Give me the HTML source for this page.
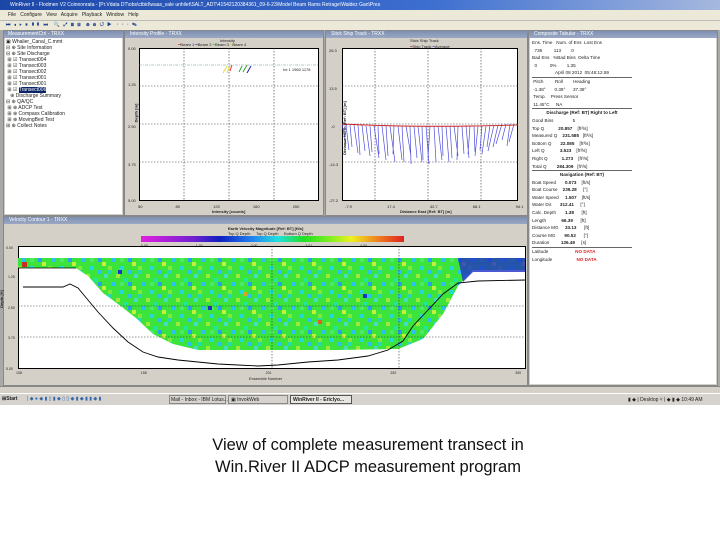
<!DOCTYPE html>
<html><head><meta charset="utf-8"><style>
*{margin:0;padding:0;box-sizing:border-box}
body{width:720px;height:540px;background:#fff;position:relative;overflow:hidden;font-family:"Liberation Sans",sans-serif}
.a{position:absolute}
.t{font-size:5px;color:#222;white-space:nowrap;line-height:6px}
.tb{background:linear-gradient(#7d8fb4,#9aa8c2);height:7px}
.cap{font-family:"Liberation Sans",sans-serif;font-size:16.5px;color:#111;width:720px;left:8px;text-align:center}
</style></head><body>
<!-- title bar -->
<div class="a" style="left:0;top:0;width:720px;height:10px;background:linear-gradient(90deg,#1c47a8,#3d6fd0 60%,#a6b8de)"></div>
<div class="a t" style="left:10px;top:2px;color:#fff">WinRiver II - Flodmen V2 Coinnonrata - [Pr.Vdata DT\obs\ctbid\waas_vale unhilet\SALT_ADT\41542120384361_09-6-23\Model Beam Rams Retrage\Waldez Gan\Pres</div>
<div class="a" style="left:0;top:10px;width:720px;height:10px;background:#ece9d8"></div>
<div class="a t" style="left:8px;top:12px">File &nbsp; Configure &nbsp; View &nbsp; Acquire &nbsp; Playback &nbsp; Window &nbsp; Help</div>
<div class="a" style="left:0;top:20px;width:720px;height:10px;background:#ece9d8;border-top:1px solid #bbb"></div>
<div class="a t" style="left:6px;top:22px;color:#123a8a;font-weight:bold;letter-spacing:1px">⏮ ◂ ▸ ⏸ ▮▮ ⏭ &nbsp;🔍 ⤢ ⊞ ⊟ &nbsp;⊕ ⊖ ↺ ▶ &nbsp;· · · ✎</div>
<!-- MDI background -->
<div class="a" style="left:0;top:30px;width:720px;height:363px;background:#a9a9a9"></div>
<!-- tree window -->
<div class="a" style="left:3px;top:30px;width:121px;height:186px;background:#d4d0c8;border:1px solid #888"></div>
<div class="a tb" style="left:4px;top:31px;width:119px"></div>
<div class="a t" style="left:8px;top:31px;color:#fff">MeasurementCtrl - TRXX</div>
<div class="a" style="left:5px;top:38px;width:117px;height:176px;background:#fff"></div>
<div class="a t" style="left:6px;top:39px;line-height:6px">▣ Whalier_Canal_C.mmt<br>⊟ ⊕ Site Information<br>⊟ ⊕ Site Discharge<br>&nbsp;⊞ ☑ Transect004<br>&nbsp;⊞ ☑ Transect003<br>&nbsp;⊞ ☑ Transect002<br>&nbsp;⊞ ☑ Transect001<br>&nbsp;⊞ ☑ Transect001<br>&nbsp;⊞ ☑ <span style="background:#0a246a;color:#fff">Transect006</span><br>&nbsp;&nbsp;&nbsp;⊕ Discharge Summary<br>⊟ ⊕ QA/QC<br>&nbsp;⊞ ⊕ ADCP Test<br>&nbsp;⊞ ⊕ Compass Calibration<br>&nbsp;⊞ ⊕ MovingBed Test<br>⊞ ⊕ Collect Notes</div>
<!-- intensity window -->
<div class="a" style="left:124px;top:30px;width:200px;height:186px;background:#d4d0c8;border:1px solid #888"></div>
<div class="a tb" style="left:125px;top:31px;width:198px"></div>
<div class="a t" style="left:130px;top:31px;color:#fff">Intensity Profile - TRXX</div>
<div class="a t" style="left:220px;top:38px;font-size:4px">Intensity</div>
<div class="a t" style="left:178px;top:42px;font-size:4px"><span style="color:#e22">━</span>Beam 1 <span style="color:#22c">━</span>Beam 2 <span style="color:#2c2">━</span>Beam 3 <span style="color:#dd2">━</span>Beam 4</div>
<div class="a" style="left:139px;top:48px;width:180px;height:153px;background:#fff;border:1px solid #000"></div>
<svg class="a" style="left:139px;top:48px" width="180" height="153"><g stroke="#333" stroke-width=".6" stroke-dasharray="1.5,1.5"><line x1="45" y1="0" x2="45" y2="153"/><line x1="90" y1="0" x2="90" y2="153"/><line x1="135" y1="0" x2="135" y2="153"/><line x1="0" y1="38" x2="180" y2="38"/><line x1="0" y1="76" x2="180" y2="76"/><line x1="0" y1="114" x2="180" y2="114"/></g><line x1="0" y1="17" x2="180" y2="17" stroke="#69a" stroke-width=".6" stroke-dasharray="3,1,1,1"/><path d="M84 25l4-7M88 25l3-7" stroke="#dd4" /><path d="M91 23l2-6" stroke="#e33"/><path d="M100 24l3-6M104 24l4-7" stroke="#3a3"/><path d="M108 25l4-7" stroke="#22a"/></svg>
<div class="a t" style="left:283px;top:67px;font-size:4px">Int 1 1960 1178</div>
<div class="a t" style="left:128px;top:46px;font-size:4px">0.00<br><br><br><br><br><br>1.25</div>
<div class="a t" style="left:128px;top:124px;font-size:4px">2.50</div>
<div class="a t" style="left:128px;top:162px;font-size:4px">3.75</div>
<div class="a t" style="left:128px;top:198px;font-size:4px">5.00</div>
<div class="a t" style="left:127px;top:110px;transform:rotate(-90deg);font-size:4px;font-weight:bold">Depth [m]</div>
<div class="a t" style="left:138px;top:204px;font-size:4px;width:182px;word-spacing:32px">50 80 120 160 200</div>
<div class="a t" style="left:212px;top:209px;font-size:4px;font-weight:bold">Intensity [counts]</div>
<!-- ship track window -->
<div class="a" style="left:325px;top:30px;width:203px;height:186px;background:#d4d0c8;border:1px solid #888"></div>
<div class="a tb" style="left:326px;top:31px;width:201px"></div>
<div class="a t" style="left:331px;top:31px;color:#fff">Stick Ship Track - TRXX</div>
<div class="a t" style="left:410px;top:38px;font-size:4px">Stick Ship Track<br><span style="color:#c22">━</span>Ship Track <span style="color:#44c">━</span>Average</div>
<div class="a" style="left:342px;top:48px;width:176px;height:153px;background:#fff;border:1px solid #000"></div>
<svg class="a" style="left:342px;top:48px" width="176" height="153"><g stroke="#333" stroke-width=".6" stroke-dasharray="1.5,1.5"><line x1="33" y1="0" x2="33" y2="153"/><line x1="86" y1="0" x2="86" y2="153"/><line x1="139" y1="0" x2="139" y2="153"/><line x1="0" y1="38" x2="176" y2="38"/><line x1="0" y1="76" x2="176" y2="76"/><line x1="0" y1="114" x2="176" y2="114"/></g>
<g stroke="#3a3ad8" stroke-width=".7" opacity=".9">
<path d="M0 76l4 20M4 77l3 25M8 77l2 22M12 77l4 28M16 77l2 30M20 77l3 26M24 78l4 30M28 78l2 26M32 78l5 32M36 78l1 28M40 78l4 34M44 78l2 30M48 78l5 36M52 78l-1 28M56 78l4 34M60 78l2 36M64 78l5 30M68 78l1 38M72 78l3 32M76 78l4 36M80 78l1 34M84 78l3 38M88 78l-2 32M92 78l2 36M96 78l4 34M100 78l1 30M104 78l3 36M108 78l2 32M112 78l4 30M116 78l-1 34M120 78l2 28M124 78l3 32M128 78l-2 28M132 78l1 26M136 78l-3 30M140 78l-2 24M144 78l-4 28M148 77l-3 22M152 77l-6 26M156 77l-5 22M160 76l-6 20M164 76l-4 16M168 76l-3 22M172 76l-5 18"/></g>
<path d="M0 76 Q60 79 130 78 T176 75" stroke="#c22" stroke-width=".9" fill="none"/></svg>
<div class="a t" style="left:329px;top:48px;font-size:4px">26.3</div>
<div class="a t" style="left:329px;top:86px;font-size:4px">13.5</div>
<div class="a t" style="left:331px;top:124px;font-size:4px">-0</div>
<div class="a t" style="left:329px;top:162px;font-size:4px">-14.3</div>
<div class="a t" style="left:329px;top:198px;font-size:4px">-27.2</div>
<div class="a t" style="left:318px;top:125px;transform:rotate(-90deg);font-size:4px;font-weight:bold">Distance North [Ref: BT] [m]</div>
<div class="a t" style="left:345px;top:204px;font-size:4px;width:176px;word-spacing:34px">-7.9 17.4 42.7 68.1 94.1</div>
<div class="a t" style="left:400px;top:209px;font-size:4px;font-weight:bold">Distance East [Ref: BT] [m]</div>
<!-- composite tabular -->
<div class="a" style="left:528px;top:30px;width:190px;height:356px;background:#d4d0c8;border:1px solid #888"></div>
<div class="a tb" style="left:529px;top:31px;width:188px"></div>
<div class="a t" style="left:534px;top:31px;color:#fff">Composite Tabular - TRXX</div>
<div class="a" style="left:530px;top:38px;width:186px;height:346px;background:#fff"></div>
<div class="a t" style="left:532px;top:39px;font-size:4.6px;line-height:7.6px;width:100px">
<div>Ens. Time &nbsp; Num. of Ens &nbsp;Lost Ens</div><div>&nbsp;&nbsp;736 &nbsp;&nbsp;&nbsp;&nbsp;&nbsp;&nbsp;&nbsp;&nbsp;113 &nbsp;&nbsp;&nbsp;&nbsp;&nbsp;&nbsp;&nbsp;0</div>
<div>Bad Ens &nbsp;&nbsp;%Bad Bins &nbsp;Delta Time</div><div>&nbsp;&nbsp;0 &nbsp;&nbsp;&nbsp;&nbsp;&nbsp;&nbsp;&nbsp;&nbsp;&nbsp;0% &nbsp;&nbsp;&nbsp;&nbsp;&nbsp;&nbsp;&nbsp;1.35</div>
<div style="text-align:center;border-bottom:1px solid #666">April 08 2012 &nbsp;05:46:12.59</div>
<div>&nbsp;Pitch &nbsp;&nbsp;&nbsp;&nbsp;&nbsp;&nbsp;&nbsp;&nbsp;Roll &nbsp;&nbsp;&nbsp;&nbsp;&nbsp;&nbsp;&nbsp;Heading</div><div>&nbsp;-1.38° &nbsp;&nbsp;&nbsp;&nbsp;&nbsp;&nbsp;0.39° &nbsp;&nbsp;&nbsp;&nbsp;&nbsp;37.38°</div>
<div>&nbsp;Temp. &nbsp;&nbsp;&nbsp;Press Sensor</div><div style="border-bottom:1px solid #666">&nbsp;11.45°C &nbsp;&nbsp;&nbsp;&nbsp;NA</div>
<div style="text-align:center;font-weight:bold">Discharge (Ref: BT) Right to Left</div>
<div>Good Bins &nbsp;&nbsp;&nbsp;&nbsp;&nbsp;&nbsp;&nbsp;&nbsp;&nbsp;&nbsp;&nbsp;&nbsp;&nbsp;&nbsp;5</div>
<div>Top Q &nbsp;&nbsp;&nbsp;&nbsp;&nbsp;&nbsp;&nbsp;&nbsp;&nbsp;&nbsp;<b>20.857</b> &nbsp;&nbsp;&nbsp;[ft³/s]</div>
<div>Measured Q &nbsp;&nbsp;&nbsp;<b>231.585</b> &nbsp;&nbsp;[ft³/s]</div>
<div>Bottom Q &nbsp;&nbsp;&nbsp;&nbsp;&nbsp;&nbsp;<b>22.085</b> &nbsp;&nbsp;&nbsp;[ft³/s]</div>
<div>Left Q &nbsp;&nbsp;&nbsp;&nbsp;&nbsp;&nbsp;&nbsp;&nbsp;&nbsp;&nbsp;&nbsp;<b>3.523</b> &nbsp;&nbsp;&nbsp;[ft³/s]</div>
<div>Right Q &nbsp;&nbsp;&nbsp;&nbsp;&nbsp;&nbsp;&nbsp;&nbsp;&nbsp;&nbsp;<b>1.273</b> &nbsp;&nbsp;&nbsp;[ft³/s]</div>
<div style="border-bottom:1px solid #666">Total Q &nbsp;&nbsp;&nbsp;&nbsp;&nbsp;&nbsp;&nbsp;<b>284.309</b> &nbsp;&nbsp;[ft³/s]</div>
<div style="text-align:center;font-weight:bold">Navigation (Ref: BT)</div>
<div>Boat Speed &nbsp;&nbsp;&nbsp;&nbsp;&nbsp;&nbsp;<b>0.073</b> &nbsp;&nbsp;&nbsp;[ft/s]</div>
<div>Boat Course &nbsp;&nbsp;&nbsp;<b>239.28</b> &nbsp;&nbsp;&nbsp;&nbsp;[°]</div>
<div>Water Speed &nbsp;&nbsp;&nbsp;&nbsp;<b>1.507</b> &nbsp;&nbsp;&nbsp;[ft/s]</div>
<div>Water Dir. &nbsp;&nbsp;&nbsp;&nbsp;&nbsp;<b>312.41</b> &nbsp;&nbsp;&nbsp;&nbsp;[°]</div>
<div>Calc. Depth &nbsp;&nbsp;&nbsp;&nbsp;&nbsp;&nbsp;<b>1.38</b> &nbsp;&nbsp;&nbsp;&nbsp;&nbsp;[ft]</div>
<div>Length &nbsp;&nbsp;&nbsp;&nbsp;&nbsp;&nbsp;&nbsp;&nbsp;&nbsp;&nbsp;&nbsp;<b>66.39</b> &nbsp;&nbsp;&nbsp;&nbsp;&nbsp;[ft]</div>
<div>Distance MG &nbsp;&nbsp;&nbsp;&nbsp;<b>33.13</b> &nbsp;&nbsp;&nbsp;&nbsp;&nbsp;[ft]</div>
<div>Course MG &nbsp;&nbsp;&nbsp;&nbsp;&nbsp;&nbsp;<b>90.52</b> &nbsp;&nbsp;&nbsp;&nbsp;&nbsp;[°]</div>
<div style="border-bottom:1px solid #666">Duration &nbsp;&nbsp;&nbsp;&nbsp;&nbsp;&nbsp;&nbsp;&nbsp;<b>136.48</b> &nbsp;&nbsp;&nbsp;&nbsp;[s]</div>
<div>Latitude &nbsp;&nbsp;&nbsp;&nbsp;&nbsp;&nbsp;&nbsp;&nbsp;&nbsp;&nbsp;&nbsp;&nbsp;&nbsp;&nbsp;&nbsp;&nbsp;&nbsp;&nbsp;&nbsp;&nbsp;<b style="color:#d22">NO DATA</b></div>
<div>Longitude &nbsp;&nbsp;&nbsp;&nbsp;&nbsp;&nbsp;&nbsp;&nbsp;&nbsp;&nbsp;&nbsp;&nbsp;&nbsp;&nbsp;&nbsp;&nbsp;&nbsp;&nbsp;<b style="color:#d22">NO DATA</b></div>
</div>
<!-- contour window -->
<div class="a" style="left:3px;top:216px;width:525px;height:170px;background:#d4d0c8;border:1px solid #888"></div>
<div class="a tb" style="left:4px;top:217px;width:523px"></div>
<div class="a t" style="left:9px;top:217px;color:#fff">Velocity Contour 1 - TRXX</div>
<div class="a t" style="left:228px;top:226px;font-size:4px;font-weight:bold">Earth Velocity Magnitude [Ref: BT] [ft/s]</div>
<div class="a t" style="left:228px;top:231px;font-size:4px">Top Q Depth &nbsp;&nbsp;&nbsp;&nbsp;Top Q Depth &nbsp;&nbsp;&nbsp;&nbsp;Bottom Q Depth</div>
<div class="a" style="left:141px;top:236px;width:263px;height:6px;background:linear-gradient(90deg,#e020e0,#7020d0 20%,#1020c0 30%,#2080f0 42%,#20e0e0 52%,#20e020 62%,#80f020 72%,#f0f020 80%,#f08020 90%,#e02020)"></div>
<div class="a t" style="left:141px;top:243px;font-size:3.5px;width:270px;word-spacing:47px">0.00 1.02 2.00 3.01 4.00</div>
<div class="a" style="left:18px;top:246px;width:508px;height:123px;background:#fff;border:1px solid #000"></div>
<svg class="a" style="left:18px;top:246px" width="508" height="123">
<defs><pattern id="p" width="30" height="24" patternUnits="userSpaceOnUse"><rect width="30" height="24" fill="#3be33a"/><rect x="0" y="0" width="4" height="4" fill="#26d9b5"/><rect x="8" y="4" width="4" height="4" fill="#9ee83a"/><rect x="20" y="0" width="4" height="4" fill="#2bc0f0"/><rect x="4" y="12" width="4" height="4" fill="#2bc0f0"/><rect x="16" y="8" width="4" height="4" fill="#1fe69a"/><rect x="24" y="16" width="4" height="4" fill="#c6ef3a"/><rect x="12" y="20" width="4" height="4" fill="#26d9d9"/><rect x="0" y="20" width="4" height="4" fill="#7ee83a"/><rect x="20" y="12" width="4" height="4" fill="#2a9ef0"/><rect x="12" y="12" width="4" height="4" fill="#4be96a"/><rect x="26" y="4" width="4" height="4" fill="#41dec0"/></pattern></defs>
<path d="M0 12H507V24H455L440 40L425 68L405 93L380 103L320 104L260 104H180L155 98L135 88L118 72L100 58L85 47L70 30L58 22H0Z" fill="url(#p)"/>
<path d="M440 12H507V26H455L445 36Z" fill="#2030c8" opacity=".8"/>
<rect x="4" y="16" width="5" height="5" fill="#c83020"/><rect x="100" y="24" width="4" height="4" fill="#2030c8"/><rect x="190" y="60" width="4" height="4" fill="#2030c8"/><rect x="300" y="74" width="4" height="4" fill="#e06020"/><rect x="345" y="48" width="4" height="4" fill="#2030c8"/><rect x="225" y="46" width="4" height="4" fill="#e0a020"/>
<line x1="0" y1="22" x2="58" y2="22" stroke="#000" stroke-width=".8"/>
<g stroke="#333" stroke-width=".6" stroke-dasharray="1.5,1.5"><line x1="254" y1="0" x2="254" y2="123"/><line x1="381" y1="0" x2="381" y2="123"/><line x1="0" y1="60" x2="508" y2="60"/><line x1="0" y1="91" x2="508" y2="91"/></g>
<path d="M5 41H45L52 38L60 42L70 54L80 66L95 82L110 96L125 106L140 111L160 114L180 116L200 118L220 119L240 120L260 119L290 116L320 114L350 110L370 104L385 95L395 80L410 64L425 48L440 37L460 35L508 34" stroke="#000" stroke-width=".9" fill="none"/>
</svg>
<div class="a t" style="left:6px;top:245px;font-size:3.5px">0.00</div>
<div class="a t" style="left:8px;top:274px;font-size:3.5px">1.25</div>
<div class="a t" style="left:8px;top:305px;font-size:3.5px">2.50</div>
<div class="a t" style="left:8px;top:335px;font-size:3.5px">3.75</div>
<div class="a t" style="left:6px;top:366px;font-size:3.5px">5.00</div>
<div class="a t" style="left:-7px;top:296px;transform:rotate(-90deg);font-size:4px;font-weight:bold">Depth [ft]</div>
<div class="a t" style="left:16px;top:370px;font-size:3.5px;width:520px;word-spacing:118px">108 158 201 252 300</div>
<div class="a t" style="left:249px;top:376px;font-size:4px">Ensemble Number</div>
<!-- status and taskbar -->
<div class="a" style="left:0;top:386px;width:720px;height:7px;background:#d4d0c8;border-top:1px solid #888"></div>
<div class="a" style="left:0;top:393px;width:720px;height:12px;background:#d6d3ce;border-top:1px solid #fff"></div>
<div class="a t" style="left:2px;top:396px;font-weight:bold">⊞Start</div>
<div class="a t" style="left:27px;top:396px;color:#36a">| ◆ ● ◆ ▮ ▯ ▮ ◆ ▯ ▯ ◆ ▮ ◆ ▮ ▮ ◆ ▮</div>
<div class="a" style="left:169px;top:395px;width:57px;height:9px;border:1px solid #888"></div>
<div class="a t" style="left:171px;top:397px">Mail - Inbox - IBM Lotus...</div>
<div class="a" style="left:228px;top:395px;width:60px;height:9px;border:1px solid #888"></div>
<div class="a t" style="left:231px;top:397px">▣ InvokWeb</div>
<div class="a" style="left:290px;top:395px;width:62px;height:9px;border:1px solid #555;background:#e8e6e0"></div>
<div class="a t" style="left:293px;top:397px;font-weight:bold">WinRiver II - Ericlyo...</div>
<div class="a t" style="left:628px;top:397px">▮ ◆ | Desktop ˅ | ◆ ▮ ◆ 10:49 AM</div>
<!-- caption -->
<div class="a cap" style="top:436px">View of complete measurement transect in</div>
<div class="a cap" style="top:458px">Win.River II ADCP measurement program</div>
</body></html>
